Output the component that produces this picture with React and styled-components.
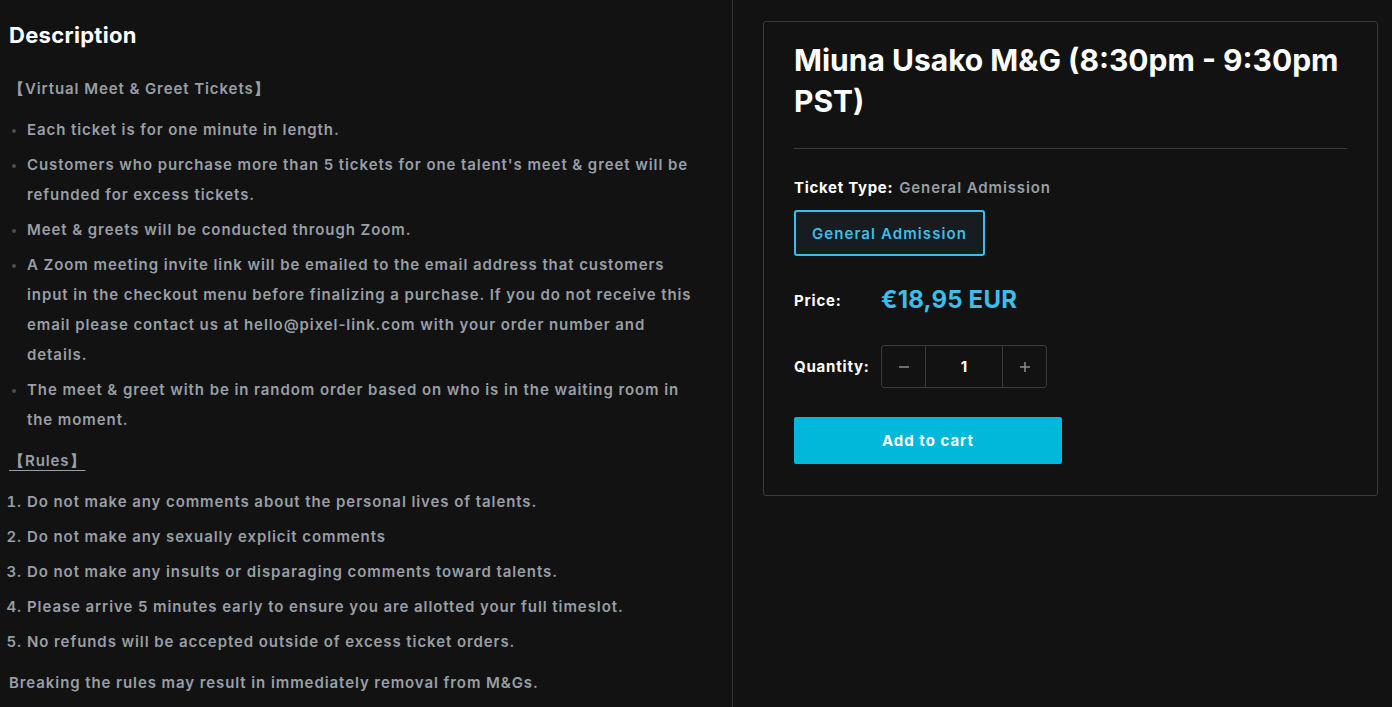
import React from "react";
import styled, { createGlobalStyle } from "styled-components";

const Global = createGlobalStyle`
  html, body { margin: 0; padding: 0; background: #121212; }
  body { font-family: "Inter", "Open Sans", sans-serif; color: #979ea5; }
  * { box-sizing: border-box; }
`;

const Page = styled.div`
  display: grid;
  grid-template-columns: 733px 1fr;
  min-height: 707px;
  background: #121212;
`;

const Left = styled.section`
  border-right: 1px solid #333;
  padding: 20px 30px 0 9px;
`;

const Heading = styled.h2`
  margin: 0;
  font-size: 22px;
  line-height: 30px;
  font-weight: 700;
  letter-spacing: 0.3px;
  color: #fff;
`;

const Para = styled.p`
  margin: ${(p) => p.$mt || 11}px 0 0;
  font-size: 15px;
  line-height: 30px;
  font-weight: 600;
  letter-spacing: 0.92px;
  color: #989fa6;
  text-decoration: ${(p) => (p.$underline ? "underline" : "none")};
  text-underline-offset: 4px;
`;

const Bullets = styled.ul`
  margin: 11px 0 0;
  padding-left: 18px;
  list-style: disc;
  & li::marker { color: #4a4f54; font-size: 13px; }
`;

const Numbers = styled.ol`
  margin: 11px 0 0;
  padding-left: 18px;
`;

const Item = styled.li`
  font-size: 15px;
  line-height: 30px;
  font-weight: 600;
  letter-spacing: 0.92px;
  color: #989fa6;
  & + & { margin-top: 5px; }
`;

const Right = styled.section`
  padding: 21px 15px 0 30px;
`;

const Card = styled.div`
  width: 615px;
  border: 1px solid #3a3a3a;
  border-radius: 3px;
  padding: 18px 30px 31px 30px;
`;

const Title = styled.h1`
  margin: 0;
  font-size: 30px;
  line-height: 41px;
  font-weight: 700;
  color: #fff;
`;

const Rule = styled.hr`
  border: 0;
  border-top: 1px solid #3a3a3a;
  margin: 26px 0 0;
`;

const TypeLine = styled.div`
  margin-top: 28px;
  font-size: 15px;
  line-height: 22px;
  font-weight: 700;
  letter-spacing: 0.7px;
  color: #fff;
  & span { color: #989fa6; font-weight: 600; letter-spacing: 0.9px; margin-left: 6px; }
`;

const Option = styled.button`
  margin-top: 11px;
  width: 191px;
  height: 46px;
  border: 2px solid #3dbde9;
  border-radius: 3px;
  background: #161c1f;
  color: #3dbde9;
  font-family: inherit;
  font-size: 15px;
  font-weight: 600;
  letter-spacing: 1.1px;
  cursor: pointer;
`;

const Row = styled.div`
  display: grid;
  grid-template-columns: 87px auto;
  align-items: center;
  justify-content: start;
  margin-top: ${(p) => p.$mt}px;
`;

const Label = styled.span`
  font-size: 15px;
  font-weight: 700;
  letter-spacing: 0.8px;
  color: #fff;
`;

const PriceValue = styled.span`
  font-size: 24px;
  line-height: 34px;
  font-weight: 700;
  letter-spacing: 0.2px;
  color: #3dbde9;
`;

const Qty = styled.div`
  display: grid;
  grid-template-columns: 43px 78px 43px;
  height: 43px;
  border: 1px solid #3a3a3a;
  border-radius: 3px;
`;

const QtyBtn = styled.button`
  background: transparent;
  border: 0;
  color: #8a8f94;
  display: flex;
  align-items: center;
  justify-content: center;
  padding: 0;
  cursor: pointer;
`;

const QtyInput = styled.div`
  border-left: 1px solid #3a3a3a;
  border-right: 1px solid #3a3a3a;
  display: flex;
  align-items: center;
  justify-content: center;
  color: #fff;
  font-size: 15px;
  font-weight: 700;
`;

const Cart = styled.button`
  margin-top: 29px;
  width: 268px;
  height: 47px;
  border: 0;
  border-radius: 2px;
  background: #00b8d9;
  color: #fff;
  font-family: inherit;
  font-size: 15px;
  font-weight: 700;
  letter-spacing: 1px;
  cursor: pointer;
`;

const Minus = () => (
  <svg width="12" height="12" viewBox="0 0 12 12"><path d="M1 6h10" stroke="currentColor" strokeWidth="1.5" /></svg>
);
const Plus = () => (
  <svg width="12" height="12" viewBox="0 0 12 12"><path d="M1 6h10M6 1v10" stroke="currentColor" strokeWidth="1.5" /></svg>
);

export default function App() {
  return (
    <>
      <Global />
      <Page>
        <Left>
          <Heading>Description</Heading>
          <Para $mt={24}>【Virtual Meet &amp; Greet Tickets】</Para>
          <Bullets>
            <Item>Each ticket is for one minute in length.</Item>
            <Item>Customers who purchase more than 5 tickets for one talent's meet &amp; greet will be refunded for excess tickets.</Item>
            <Item>Meet &amp; greets will be conducted through Zoom.</Item>
            <Item>A Zoom meeting invite link will be emailed to the email address that customers input in the checkout menu before finalizing a purchase. If you do not receive this email please contact us at hello@pixel-link.com with your order number and details.</Item>
            <Item>The meet &amp; greet with be in random order based on who is in the waiting room in the moment.</Item>
          </Bullets>
          <Para $underline>【Rules】</Para>
          <Numbers>
            <Item>Do not make any comments about the personal lives of talents.</Item>
            <Item>Do not make any sexually explicit comments</Item>
            <Item>Do not make any insults or disparaging comments toward talents.</Item>
            <Item>Please arrive 5 minutes early to ensure you are allotted your full timeslot.</Item>
            <Item>No refunds will be accepted outside of excess ticket orders.</Item>
          </Numbers>
          <Para>Breaking the rules may result in immediately removal from M&amp;Gs.</Para>
        </Left>
        <Right>
          <Card>
            <Title>Miuna Usako M&amp;G (8:30pm - 9:30pm PST)</Title>
            <Rule />
            <TypeLine>Ticket Type:<span>General Admission</span></TypeLine>
            <Option>General Admission</Option>
            <Row $mt={27}>
              <Label>Price:</Label>
              <PriceValue>€18,95 EUR</PriceValue>
            </Row>
            <Row $mt={28}>
              <Label>Quantity:</Label>
              <Qty>
                <QtyBtn aria-label="decrease"><Minus /></QtyBtn>
                <QtyInput>1</QtyInput>
                <QtyBtn aria-label="increase"><Plus /></QtyBtn>
              </Qty>
            </Row>
            <Cart>Add to cart</Cart>
          </Card>
        </Right>
      </Page>
    </>
  );
}
